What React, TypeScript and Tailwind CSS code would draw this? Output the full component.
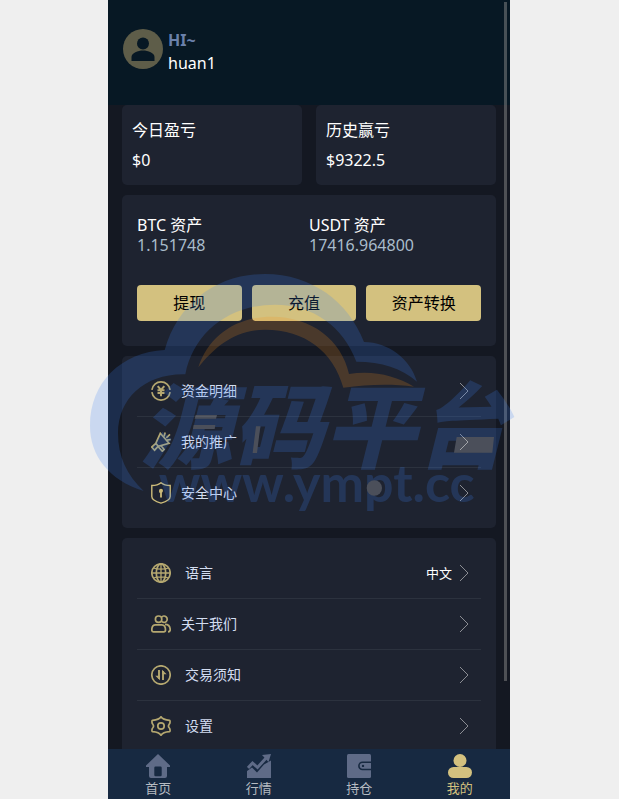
import type { ReactNode } from "react";
import { clsx } from "clsx";

const TEXT = {
  greeting: "HI~",
  username: "huan1",
  language: "中文",
  brand: "源码平台",
  site: "www.ympt.cc"
};

const PROFITS = [
  { label: "今日盈亏", value: "$0" },
  { label: "历史赢亏", value: "$9322.5" }
];

const ASSETS = [
  { label: "BTC 资产", value: "1.151748" },
  { label: "USDT 资产", value: "17416.964800" }
];

const ACTIONS = ["提现", "充值", "资产转换"];

const LineIcon = ({ children }: { children: ReactNode }) => (
  <svg
    viewBox="0 0 20 20"
    className="h-5 w-5 shrink-0 text-[#b5a870]"
    fill="none"
    stroke="currentColor"
    strokeWidth="1.7"
    aria-hidden="true"
  >
    {children}
  </svg>
);

const FundsIcon = () => (
  <LineIcon>
    <path d="M.9 8.800A9.200 9.200 0 0 1 19.100 8.800M.9 11.200A9.200 9.200 0 0 0 19.100 11.200" />
    <path d="M6.700 5.200 10 9l3.300-3.800M10 9v6.200M6.500 9.300h7M6.500 12h7" strokeWidth="2" />
  </LineIcon>
);

const PromoteIcon = () => (
  <LineIcon>
    <path d="M9.300 1.300 18 11.200 7.300 14.200 4.800 11.400ZM4.800 11.400.800 15l2.800 3.200 3.700-4M7 14.500l4.300 4.700 1.800-1.800-3-3.600" />
    <path d="M13 4.500 14.200.600M15.300 5.800 19 2.300M16 8.200l3.700-.700" />
  </LineIcon>
);

const SecurityIcon = () => (
  <svg
    viewBox="0 0 20 22"
    className="h-[22px] w-5 shrink-0 text-[#cdbc7a]"
    fill="none"
    stroke="currentColor"
    aria-hidden="true"
  >
    <path
      d="M10 .8C7.600 2.800 4.500 3.500.8 3.500V14.500C.8 18.300 6 20 10 21.200 14 20 19.200 18.300 19.200 14.500V3.500C15.500 3.500 12.400 2.800 10 .8Z"
      strokeWidth="1.400"
    />
    <circle cx="10" cy="8.800" r="2" fill="currentColor" stroke="none" />
    <path d="M10 9v6.500M8.400 9.800H10" strokeWidth="1.800" />
  </svg>
);

const GlobeIcon = () => (
  <LineIcon>
    <circle cx="10" cy="10" r="9.200" />
    <ellipse cx="10" cy="10" rx="4.700" ry="9.200" />
    <path d="M10 .8v18.400M.8 10h18.400M2.500 5c4 1.600 11 1.600 15 0M2.500 15c4-1.600 11-1.600 15 0" strokeWidth="1.300" />
  </LineIcon>
);

const AboutIcon = () => (
  <LineIcon>
    <circle cx="7.600" cy="5.200" r="3.200" />
    <path d="M10.500 3.200a3.200 3.200 0 1 1 0 4M4.500 10.800h6.300c2.300 0 3.700 2.200 3.700 5.200 0 1.200-.6 1.800-1.800 1.800H2.600c-1.200 0-1.800-.6-1.800-1.800 0-3 1.400-5.200 3.700-5.200ZM14 10.300c3.500 0 5.200 2.200 5.200 5.500 0 1.300-.7 2-2.200 2" />
  </LineIcon>
);

const TradeIcon = () => (
  <LineIcon>
    <circle cx="10" cy="10" r="9.200" />
    <path d="M8 5v9M12 15V6" strokeWidth="1.900" />
    <path d="M4.300 10.800H9V15.300ZM15.700 9.200H11V4.700Z" fill="currentColor" stroke="none" />
  </LineIcon>
);

const SettingsIcon = () => (
  <LineIcon>
    <path
      d="M10 .8C11.500 3.300 14 4 18.500 4.300 19.300 4.400 19.300 7 18.200 8.200 17.300 9.300 17.300 10.700 18.200 11.800 19.300 13 19.300 15.600 18.500 15.700 14 16 11.500 16.700 10 19.200 8.500 16.700 6 16 1.500 15.700.7 15.600.7 13 1.800 11.800 2.700 10.700 2.700 9.300 1.800 8.200.7 7 .7 4.400 1.500 4.300 6 4 8.500 3.300 10 .8Z"
      strokeLinejoin="round"
    />
    <circle cx="10" cy="10" r="3.200" />
  </LineIcon>
);

const ACCOUNT_LINKS = [
  { label: "资金明细", icon: <FundsIcon /> },
  { label: "我的推广", icon: <PromoteIcon /> },
  { label: "安全中心", icon: <SecurityIcon /> }
];

const SYSTEM_LINKS = [
  { label: "语言", icon: <GlobeIcon />, value: TEXT.language, wide: true },
  { label: "关于我们", icon: <AboutIcon /> },
  { label: "交易须知", icon: <TradeIcon />, wide: true },
  { label: "设置", icon: <SettingsIcon />, wide: true }
];

const TABS = [
  {
    label: "首页",
    icon: (
      <path
        fillRule="evenodd"
        d="M12 0 24 11.500V13H21V22Q21 24 19 24H5Q3 24 3 22V13H0V11.500ZM9.500 12.500Q8.300 12.500 8.300 13.700V21Q8.300 22.200 9.500 22.200H14.500Q15.700 22.200 15.700 21V13.700Q15.700 12.500 14.500 12.500Z"
      />
    )
  },
  {
    label: "行情",
    icon: (
      <>
        <path d="M0 24V17L5 13.500 10 18.500 17 10.500 24 6.500V24Z" />
        <path d="M1 14 5.500 9 10.500 13.500 20 3" fill="none" stroke="currentColor" strokeWidth="3" />
        <path d="M15 1 24 0 21.500 8Z" />
      </>
    )
  },
  {
    label: "持仓",
    icon: (
      <>
        <rect width="24" height="24" rx="1.500" />
        <path d="M24 8.300H15.500a3.600 3.600 0 0 0 0 7.200H24" fill="none" stroke="#172941" strokeWidth="1.600" />
        <circle cx="16" cy="11.900" r="1.200" fill="#172941" />
      </>
    )
  },
  {
    label: "我的",
    active: true,
    icon: (
      <>
        <circle cx="12" cy="6.500" r="6.500" />
        <rect y="13" width="24" height="11" rx="5.500" />
      </>
    )
  }
];

type MenuItem = { label: string; icon: ReactNode; value?: string; wide?: boolean };

const MenuList = ({ items }: { items: MenuItem[] }) => (
  <ul className="mt-[10px] rounded-[5px] bg-[#1e2330] px-[15px] py-[10px]">
    {items.map((item) => (
      <li key={item.label} className="border-b border-[#2c323e] last:border-b-0">
        <a href="#" className="flex h-[50px] items-center pr-3 pl-[14px] text-sm text-[#d3ddf0]">
          {item.icon}
          <span className={item.wide ? "ml-[14px]" : "ml-[10px]"}>{item.label}</span>
          {item.value && <span className="ml-auto text-[13px] text-white">{item.value}</span>}
          <svg
            viewBox="0 0 10 18"
            className={clsx("h-[18px] w-[10px]", item.value ? "ml-[7px]" : "ml-auto")}
            fill="none"
            stroke="#8b8d93"
            aria-hidden="true"
          >
            <path d="M1 1 9 9 1 17" />
          </svg>
        </a>
      </li>
    ))}
  </ul>
);

const Watermark = () => (
  <svg
    viewBox="15 27 1284 729"
    className="pointer-events-none absolute top-[274px] -left-[18px] h-[243px] w-[428px] opacity-20"
    fill="#3c82f5"
    aria-hidden="true"
  >
    <path d="M176 678C70 645 15 570 15 483C15 350 110 262 239 255C280 110 400 27 540 27C680 27 790 110 837 231C910 232 975 280 996 350C950 310 890 290 814 290C775 185 685 119 570 119C430 119 325 205 301 328C180 325 99 400 99 505C99 575 125 630 176 678Z" />
    <path
      fill="#fa9119"
      d="M340 307C370 215 450 155 560 155C680 155 770 225 792 327C860 315 930 330 987 365C920 356 850 358 775 368C745 260 660 194 540 194C450 194 390 245 340 307Z"
    />
    <text
      x="165"
      y="588"
      fontSize="276"
      className="font-['Noto_Sans_CJK_SC',sans-serif] font-black italic"
    >
      {TEXT.brand}
    </text>
    <text x="221" y="711" fontSize="156" className="font-[Lato,sans-serif] font-bold">
      {TEXT.site}
    </text>
    <g fill="#fff">
      <path d="M332 450h64l-3 11h-64ZM326 480h65l-2 12h-65ZM513 484h13l-10 80h-13ZM1115 516h112l-5 47h-115Z" />
      <circle cx="868" cy="669" r="23" />
    </g>
  </svg>
);

export default function App() {
  return (
    <div className="flex min-h-screen justify-center bg-[#efefef] pr-px font-['Noto_Sans','Noto_Sans_CJK_SC',sans-serif]">
      <div className="relative flex h-screen w-full max-w-[402px] flex-col bg-[#141822]">
        <div className="min-h-0 flex-1 overflow-hidden">
          <header className="flex h-[105px] items-start gap-[5px] bg-[#071824] px-[15px] pt-[29px]">
            <svg viewBox="0 0 40 40" className="h-10 w-10" aria-hidden="true">
              <circle cx="20" cy="20" r="20" fill="#5e5d49" />
              <circle cx="20" cy="14.500" r="6" fill="#071824" />
              <path d="M8.500 32V28C8.500 24 15 21.500 20 21.500S31.500 24 31.500 28V32Z" fill="#071824" />
            </svg>
            <div className="leading-[23px]">
              <p className="font-bold text-[#6b81ab]">{TEXT.greeting}</p>
              <p className="text-white">{TEXT.username}</p>
            </div>
          </header>
          <main className="px-[14px]">
            <section className="grid grid-cols-2 gap-[14px]">
              {PROFITS.map((item) => (
                <div key={item.label} className="rounded-[5px] bg-[#1e2330] p-[10px] leading-[30px] text-white">
                  <p>{item.label}</p>
                  <p>{item.value}</p>
                </div>
              ))}
            </section>
            <section className="mt-[10px] rounded-[5px] bg-[#1e2330] px-[15px] pt-5 pb-[25px]">
              <div className="grid grid-cols-2 leading-5">
                {ASSETS.map((asset) => (
                  <div key={asset.label}>
                    <p className="text-white">{asset.label}</p>
                    <p className="text-[#a9bccb]">{asset.value}</p>
                  </div>
                ))}
              </div>
              <div className="mt-[30px] grid grid-cols-[21fr_21fr_23fr] gap-[10px]">
                {ACTIONS.map((action) => (
                  <button key={action} type="button" className="h-9 rounded-[4px] bg-[#d3c17f] text-black">
                    {action}
                  </button>
                ))}
              </div>
            </section>
            <MenuList items={ACCOUNT_LINKS} />
            <MenuList items={SYSTEM_LINKS} />
          </main>
        </div>
        <nav className="grid h-[50px] shrink-0 grid-cols-4 bg-[#172941]">
          {TABS.map((tab) => (
            <a
              key={tab.label}
              href="#"
              className={clsx(
                "flex flex-col items-center pt-[5px] text-[13px] leading-5",
                tab.active ? "text-[#d3c17f]" : "text-[#5f6b87]"
              )}
            >
              <svg viewBox="0 0 24 24" className="h-6 w-6" fill="currentColor" aria-hidden="true">
                {tab.icon}
              </svg>
              <span className={tab.active ? "text-[#d3c17f]" : "text-[#b6bbc2]"}>{tab.label}</span>
            </a>
          ))}
        </nav>
        <div className="absolute top-[2px] right-[3px] h-[85%] w-[3px] bg-[#888]/50" />
        <Watermark />
      </div>
    </div>
  );
}
